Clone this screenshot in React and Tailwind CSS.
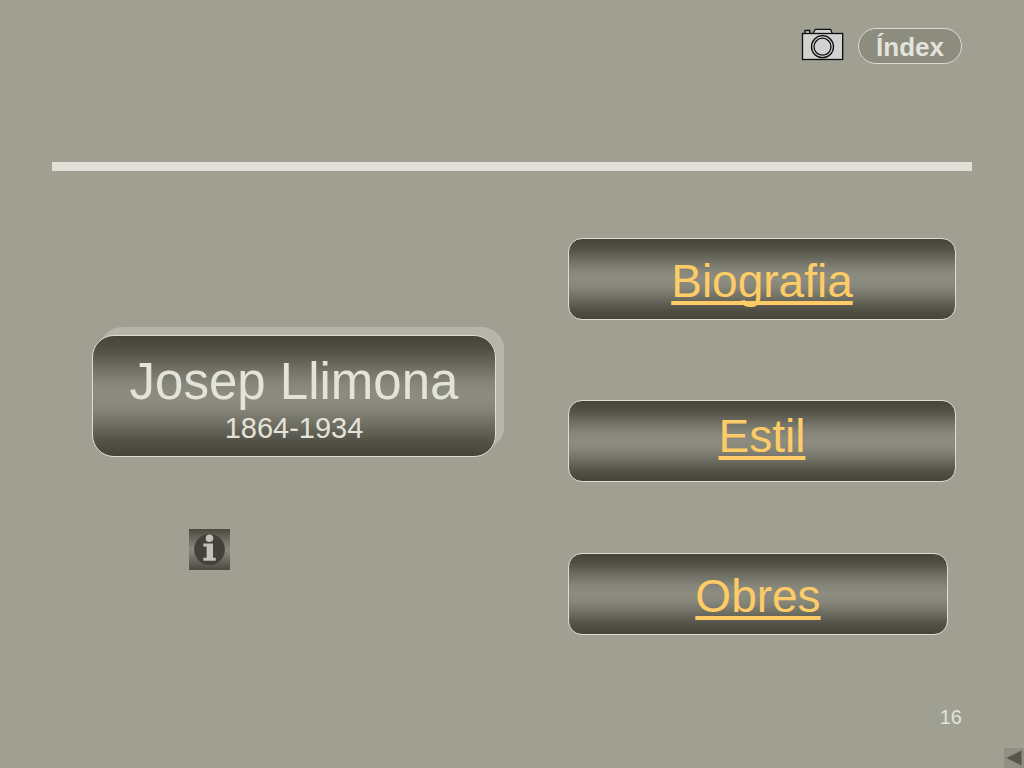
const panel =
  "border border-[#dcdcd2] bg-[linear-gradient(#45443b_0%,#525148_12%,#727165_28%,#86867a_40%,#8c8c7f_50%,#86867a_60%,#727165_72%,#525148_88%,#45443b_100%)]";

function CameraIcon() {
  return (
    <svg viewBox="0 0 44 34" className="h-[34px] w-11" fill="#d2d2d0" stroke="#0c0c0c" strokeWidth="1.3" aria-hidden="true">
      <path d="M4 5.5V2.5H8.8V5.5" />
      <path d="M12 5.5L14.3 1.3H29.6L31.3 5.5" />
      <rect x="1.5" y="5.5" width="40.2" height="26" />
      <circle cx="21.5" cy="18.7" r="11" />
      <circle cx="21.5" cy="18.7" r="8.5" />
    </svg>
  );
}

function InfoIcon() {
  return (
    <svg viewBox="0 0 41 41" className="h-[41px] w-[41px]" aria-hidden="true">
      <circle cx="20.5" cy="20.5" r="15.4" fill="#42413a" />
      <circle cx="20.5" cy="9.3" r="3.8" fill="#c2c2b8" />
      <path d="M14.3 14.5H24V28.7H26.7V31.8H14.3V28.7H17.6V17.6H14.3Z" fill="#c2c2b8" />
    </svg>
  );
}

function TopicLink({ href, className, children }) {
  return (
    <a
      href={href}
      className={`${panel} ${className} flex h-[82px] items-center justify-center rounded-[14px] text-[46px] leading-[52px] text-[#fecc66] underline decoration-4 underline-offset-4 [text-decoration-skip-ink:none]`}
    >
      {children}
    </a>
  );
}

export default function App() {
  return (
    <div className="flex min-h-screen flex-col bg-[#a0a092] font-['Liberation_Sans',Arial,sans-serif] text-[#e3e3dc]">
      <header className="px-[52px]">
        <div className="flex h-[162px] items-start justify-end gap-[13px] pt-7 pr-[10px]">
          <button type="button" aria-label="Imatges">
            <CameraIcon />
          </button>
          <a
            href="#index"
            className="flex h-9 w-[104px] items-center justify-center rounded-full border border-[#dcdcd2] bg-[#8c8c7f] pt-0.5 text-[26px] leading-8 font-bold"
          >
            Índex
          </a>
        </div>
        <hr className="h-[9px] border-0 bg-[#e1e1da]" />
      </header>

      <main className="grid grid-cols-[404fr_388fr] gap-[72px] pt-[67px] pr-[68px] pl-[92px]">
        <section className="flex flex-col items-start pt-[97px]">
          <div className={`${panel} w-full rounded-[22px] pt-4 pb-3 text-center shadow-[8px_-8px_0_#b5b5a9]`}>
            <h1 className="text-[51px] leading-[60px]">Josep Llimona</h1>
            <p className="text-[29px] leading-8">1864-1934</p>
          </div>
          <button
            type="button"
            aria-label="Informació"
            className="mt-[72px] ml-[97px] bg-[linear-gradient(#4b4a41,#8a8a7d_50%,#4b4a41)]"
          >
            <InfoIcon />
          </button>
        </section>

        <nav className="flex flex-col">
          <TopicLink href="#biografia" className="pt-1">Biografia</TopicLink>
          <TopicLink href="#estil" className="mt-20 pb-[10px]">Estil</TopicLink>
          <TopicLink href="#obres" className="mt-[71px] mr-2 pt-1">Obres</TopicLink>
        </nav>
      </main>

      <footer className="mt-auto flex flex-col items-end gap-[17px]">
        <p className="pr-[62px] text-[20px] leading-7">16</p>
        <button type="button" aria-label="Anterior" className="bg-[#8f8f82]">
          <svg viewBox="0 0 20 20" className="h-5 w-5" aria-hidden="true">
            <path d="M2.5 10L17.5 2.5V17.5Z" fill="#55554b" />
          </svg>
        </button>
      </footer>
    </div>
  );
}
